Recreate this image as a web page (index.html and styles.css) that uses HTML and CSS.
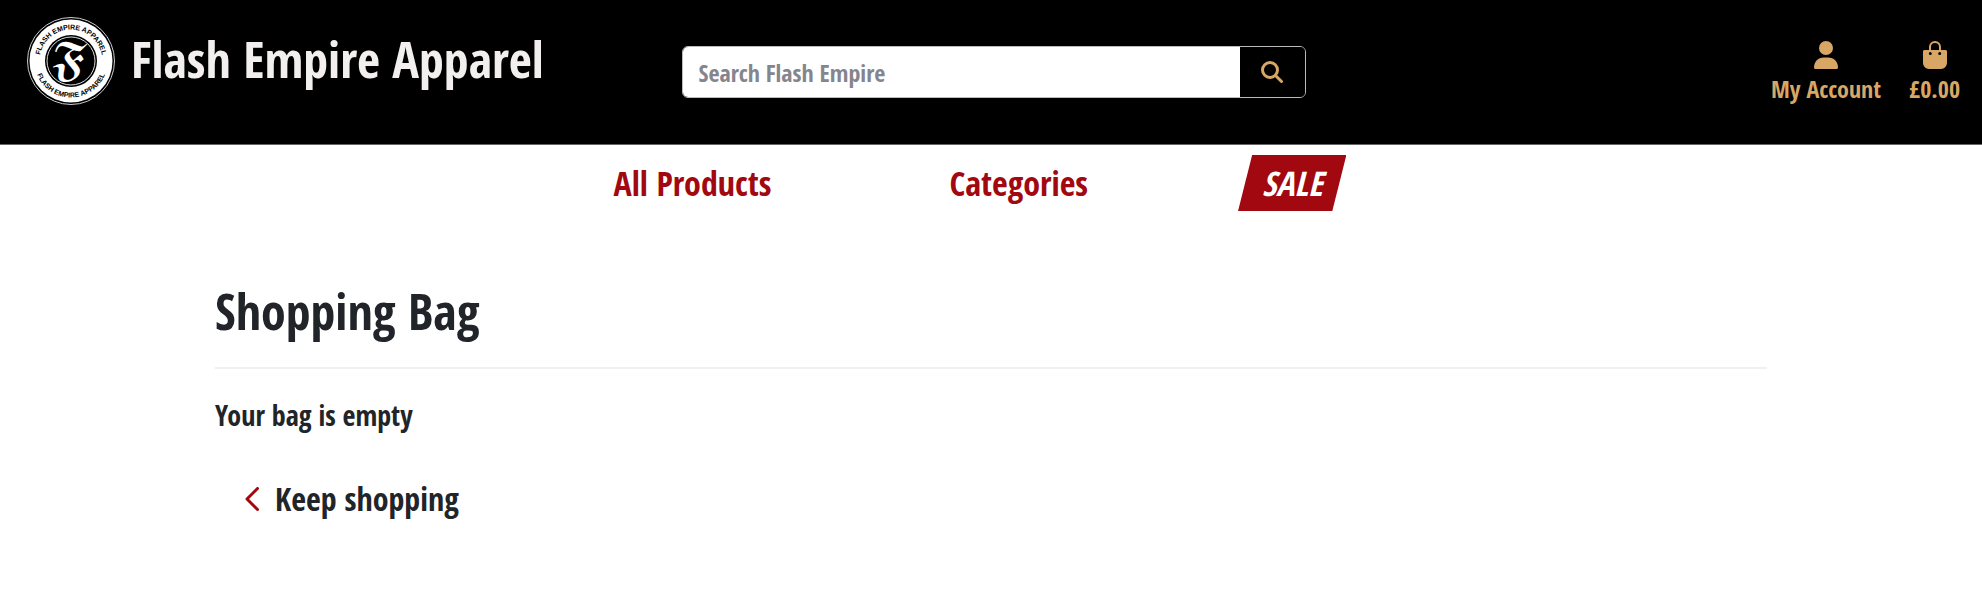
FILE: index.html
```html
<!DOCTYPE html>
<html lang="en">
<head>
<meta charset="utf-8">
<meta name="viewport" content="width=device-width, initial-scale=1">
<title>Flash Empire Apparel</title>
<link rel="stylesheet" href="styles.css">
</head>
<body>
<header class="header">
  <a class="brand" href="#">
    <svg class="logo" viewBox="0 0 88 88" aria-hidden="true">
      <defs>
        <path id="arc-top" d="M12.500 44a31.500 31.500 0 0 1 63 0"/>
        <path id="arc-bottom" d="M7.500 44a36.500 36.500 0 0 0 73 0"/>
      </defs>
      <circle cx="44" cy="44" r="43.500" fill="#000" stroke="#ccc" stroke-width="1"/>
      <circle cx="44" cy="44" r="41.500" fill="#fff"/>
      <circle cx="44" cy="44" r="26" fill="#000"/>
      <circle cx="44" cy="44" r="24" fill="none" stroke="#ddd" stroke-width="1"/>
      <text class="logo-ring"><textPath href="#arc-top" startOffset="50%">FLASH EMPIRE APPAREL</textPath></text>
      <text class="logo-ring"><textPath href="#arc-bottom" startOffset="50%">FLASH EMPIRE APPAREL</textPath></text>
      <text class="logo-letter" x="43" y="58">𝕱</text>
    </svg>
    <span class="brand-name">Flash Empire Apparel</span>
  </a>
  <form class="search">
    <input class="search-input" type="search" placeholder="Search Flash Empire" aria-label="Search Flash Empire">
    <button class="search-button" type="button" aria-label="Search">
      <svg class="search-icon" viewBox="0 0 22 22" aria-hidden="true"><circle cx="9" cy="9" r="7.500"/><path d="M14.500 14.500 20.500 20.500"/></svg>
    </button>
  </form>
  <nav class="account" aria-label="Account">
    <a class="account-link" href="#">
      <svg class="account-icon" viewBox="0 0 24 28" aria-hidden="true"><circle cx="12" cy="7" r="7"/><path d="M0 26.500C0 20.500 4.300 16.500 9.700 16.500h4.600C19.700 16.500 24 20.500 24 26.500c0 .8-.6 1.500-1.500 1.500h-21C.6 28 0 27.300 0 26.500z"/></svg>
      My Account
    </a>
    <a class="account-link" href="#">
      <svg class="account-icon" viewBox="0 0 24 28" aria-hidden="true"><path fill-rule="evenodd" d="M6 9V6a6 6 0 0 1 12 0v3h4.500c.8 0 1.500.7 1.500 1.500V22a6 6 0 0 1-6 6H6a6 6 0 0 1-6-6V10.500C0 9.700.7 9 1.500 9zm2 0h8V6a4 4 0 0 0-8 0zM7.300 11a1.500 1.500 0 1 0 0 3 1.500 1.500 0 0 0 0-3zm9.400 0a1.500 1.500 0 1 0 0 3 1.500 1.500 0 0 0 0-3z"/></svg>
      £0.00
    </a>
  </nav>
</header>
<nav class="menu" aria-label="Main">
  <a class="menu-link" href="#">All Products</a>
  <a class="menu-link" href="#">Categories</a>
  <a class="menu-link sale" href="#">SALE</a>
</nav>
<main class="content">
  <h1 class="title">Shopping Bag</h1>
  <p class="message">Your bag is empty</p>
  <a class="back" href="#">
    <svg class="back-icon" viewBox="0 0 14 24" aria-hidden="true"><path d="M12.500 1.500 2 12l10.500 10.500"/></svg>
    Keep shopping
  </a>
</main>
</body>
</html>
```
FILE: styles.css
```css
* {
  box-sizing: border-box;
}

body {
  margin: 0;
  background: #fff;
  color: #212529;
  font-family: "Open Sans Condensed", "Liberation Sans Narrow", "Liberation Sans", sans-serif;
}

a {
  color: inherit;
  text-decoration: none;
}

.header {
  display: grid;
  grid-template-columns: 1fr minmax(0, 624px) 1fr;
  align-items: start;
  padding: 17px 22px 39px 27px;
  background: #000;
  border-bottom: 1px solid #666;
}

.brand {
  display: flex;
  align-items: center;
  gap: 16px;
  color: #f3efef;
}

.logo {
  width: 88px;
  height: 88px;
  flex: none;
}

.logo-ring {
  font: bold 7px "Liberation Sans", sans-serif;
  text-anchor: middle;
  fill: #000;
}

.logo-letter {
  font: 42px "DejaVu Math TeX Gyre", "DejaVu Serif", serif;
  text-anchor: middle;
  fill: #fff;
}

.brand-name {
  font-size: 50px;
  line-height: 84px;
  padding-bottom: 4px;
  white-space: nowrap;
}

.search {
  display: flex;
  height: 52px;
  margin-top: 29px;
  border: 1px solid #bbb;
  border-radius: 6px;
  overflow: hidden;
}

.search-input {
  flex: 1;
  min-width: 0;
  padding: 0 16px;
  border: 0;
  background: #fff;
  font-family: inherit;
  font-size: 24px;
}

.search-input::placeholder {
  color: #85858d;
  opacity: 1;
}

.search-button {
  width: 65px;
  padding: 0;
  border: 0;
  background: #000;
}

.search-icon {
  display: block;
  width: 22px;
  height: 22px;
  margin: auto;
  fill: none;
  stroke: #d8a765;
  stroke-width: 3;
  stroke-linecap: round;
}

.account {
  display: flex;
  justify-content: flex-end;
  gap: 28px;
  padding-top: 24px;
}

.account-link {
  display: flex;
  flex-direction: column;
  align-items: center;
  gap: 6px;
  color: #d8a765;
  font-size: 24px;
  line-height: 28px;
}

.account-icon {
  width: 24px;
  height: 28px;
  fill: currentColor;
}

.menu {
  display: flex;
  justify-content: center;
  align-items: center;
  gap: 178px;
  padding: 10px 22px 0 0;
  color: #a20810;
  font-size: 34px;
  line-height: 56px;
}

.sale {
  margin-left: -28px;
  padding: 0 24px;
  background: #a20810;
  clip-path: polygon(13% 0, 100% 0, 87% 100%, 0 100%);
  color: #fff;
  font-style: italic;
}

.content {
  max-width: 1600px;
  margin: 0 auto;
  padding: 64px 24px;
}

.title {
  margin: 0 0 24px;
  padding-bottom: 20px;
  border-bottom: 2px solid #f0f0f0;
  font-size: 50px;
  font-weight: 400;
  line-height: 72px;
}

.message {
  margin: 0 0 40px;
  font-size: 28px;
  line-height: 44px;
}

.back {
  display: inline-flex;
  align-items: center;
  gap: 16px;
  margin-left: 30px;
  font-size: 32px;
  line-height: 44px;
}

.back-icon {
  width: 14px;
  height: 24px;
  fill: none;
  stroke: #a20810;
  stroke-width: 3;
  stroke-linecap: round;
  stroke-linejoin: round;
}
```
